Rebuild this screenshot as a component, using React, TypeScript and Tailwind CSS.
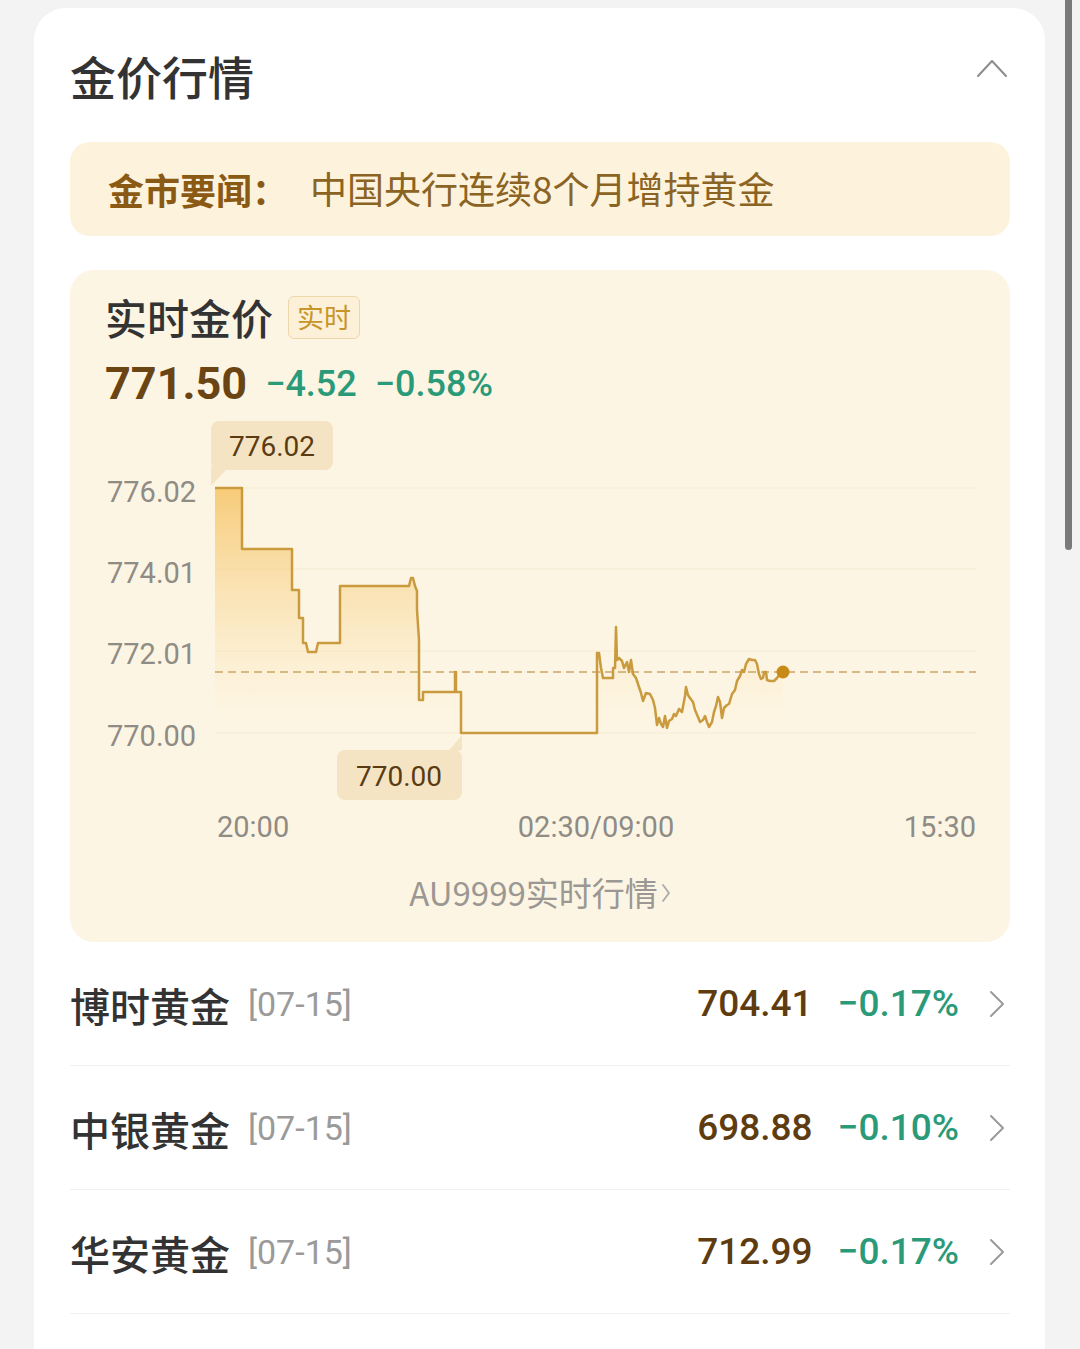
import React from 'react';

const CJK = "font-['Noto_Sans_CJK_SC','Noto_Sans',sans-serif]";
const NUM = "font-['Roboto','Noto_Sans_CJK_SC',sans-serif]";

const linePath =
  'M215,488 H242 V549 H292 V590 H299 V618 H303 V643 H306 L308,652 H316 L318,643 H340 V586 H409 L411,578 H413 L415,586 L417,591 V610 L419,640 V700 H423 V692 H455 V672 H456 V692 H461 V733 H597 V653 H599 L601,668 L603,678 H613 V668 L615,668 L616,627 L617,660 L619,658 L622,661 L624,668 L627,662 L629,672 L631,660 L633,674 L636,678 L638,684 L641,693 L643,701 L646,693 L650,694 L653,700 L655,708 L657,725 L659,718 L661,724 L663,727 L665,716 L667,728 L669,721 L672,719 L674,714 L676,716 L679,709 L682,712 L685,696 L686,687 L688,695 L690,698 L693,702 L695,710 L698,717 L700,722 L703,720 L705,716 L707,722 L709,727 L712,722 L714,712 L716,706 L718,697 L720,702 L722,718 L724,708 L727,705 L729,704 L732,694 L735,690 L737,681 L740,676 L742,670 L744,672 L746,664 L749,659 L752,660 L755,660 L757,664 L759,674 L761,679 L763,678 L764,672 L766,672 L767,680 L770,681 L774,681 L777,678 L780,674 L783,672';

const funds = [
  { name: '博时黄金', date: '[07-15]', price: '704.41', pct: '−0.17%' },
  { name: '中银黄金', date: '[07-15]', price: '698.88', pct: '−0.10%' },
  { name: '华安黄金', date: '[07-15]', price: '712.99', pct: '−0.17%' },
];

const Chevron = () => (
  <svg width="16" height="28" viewBox="0 0 16 28" fill="none">
    <path d="M2 2 L14 14 L2 26" stroke="#9a9a9a" strokeWidth="2" strokeLinecap="round" strokeLinejoin="round" />
  </svg>
);

// price chart, drawn in page coordinates (viewBox offset to the card origin)
const GoldChart = () => (
  <svg width="940" height="435" viewBox="70 415 940 435" className="block">
    <defs>
      <linearGradient id="goldFill" gradientUnits="userSpaceOnUse" x1="0" y1="488" x2="0" y2="735">
        <stop offset="0" stopColor="#f6c466" stopOpacity="0.85" />
        <stop offset="0.75" stopColor="#f8d690" stopOpacity="0.15" />
        <stop offset="1" stopColor="#fdf5e2" stopOpacity="0" />
      </linearGradient>
    </defs>

    {[488, 569, 651, 733].map((y) => (
      <line key={y} x1="215" x2="976" y1={y} y2={y} stroke="#f5ead2" strokeWidth="1" />
    ))}

    <path d={`${linePath} L783,733 L215,733 Z`} fill="url(#goldFill)" />
    <line x1="215" x2="976" y1="672" y2="672" stroke="#c9a565" strokeWidth="1.5" strokeDasharray="8 5" />
    <path d={linePath} fill="none" stroke="#c99a3e" strokeWidth="2.5" strokeLinejoin="round" />
    <circle cx="783" cy="672" r="6.5" fill="#c98b18" />

    <g fill="#8f8b85" fontSize="29" fontFamily="Roboto, sans-serif">
      <text x="107" y="502">776.02</text>
      <text x="107" y="583">774.01</text>
      <text x="107" y="664">772.01</text>
      <text x="107" y="746">770.00</text>
      <text x="217" y="837">20:00</text>
      <text x="596" y="837" textAnchor="middle">02:30/09:00</text>
      <text x="976" y="837" textAnchor="end">15:30</text>
    </g>

    <rect x="211" y="421" width="122" height="49" rx="8" fill="#f4e4c4" />
    <polygon points="211,466 226,470 211,486" fill="#f4e4c4" />
    <text x="272" y="456" textAnchor="middle" fill="#5a3b12" fontSize="28" fontFamily="Roboto, sans-serif">776.02</text>

    <rect x="337" y="750" width="125" height="50" rx="8" fill="#f4e4c4" />
    <polygon points="446,754 462,750 462,735" fill="#f4e4c4" />
    <text x="399" y="786" textAnchor="middle" fill="#5a3b12" fontSize="28" fontFamily="Roboto, sans-serif">770.00</text>
  </svg>
);

export default function App() {
  return (
    <div className="relative w-[1080px] h-[1349px] overflow-hidden bg-[#f3f3f3] pt-[8px] pl-[34px]">
      <div className="w-[1011px] min-h-[1400px] rounded-[32px] bg-white pl-[36px] pr-[35px]">
        {/* Header */}
        <div className="flex items-center justify-between pt-[44px]">
          <h2 className={`${CJK} text-[46px] leading-[46px] font-medium text-[#333]`}>金价行情</h2>
          <svg width="32" height="20" viewBox="0 0 32 20" fill="none" className="mr-[2px] -mt-[14px]">
            <path d="M2 18 L16 3 L30 18" stroke="#8c8c8c" strokeWidth="2" strokeLinecap="round" strokeLinejoin="round" />
          </svg>
        </div>

        {/* News */}
        <div className="mt-[44px] h-[94px] rounded-[20px] bg-[#fdf3dc] flex items-center px-[38px]">
          <span className={`${CJK} text-[36px] font-bold text-[#8a5a14]`}>金市要闻：</span>
          <span className={`${CJK} ml-[22px] text-[37px] text-[#8b6424]`}>中国央行连续8个月增持黄金</span>
        </div>

        {/* Realtime price card */}
        <div className="mt-[34px] h-[672px] rounded-[24px] bg-[#fdf5e3]">
          <div className="flex items-center gap-[15px] pt-[24px] pl-[35px]">
            <span className={`${CJK} text-[42px] leading-[46px] font-medium text-[#333]`}>实时金价</span>
            <span className={`${CJK} h-[43px] flex items-center px-[8px] rounded-[6px] border border-[#ecd7aa] bg-[#fcf1d8] text-[27px] text-[#c8952a]`}>
              实时
            </span>
          </div>
          <div className={`${NUM} flex items-center gap-[18px] mt-[19px] pl-[35px] h-[50px]`}>
            <span className="text-[45px] font-bold text-[#6a4413]">771.50</span>
            <span className="text-[36px] font-medium text-[#2a9a79]">−4.52</span>
            <span className="text-[36px] font-medium text-[#2a9a79]">−0.58%</span>
          </div>
          <div className="mt-[6px]">
            <GoldChart />
          </div>
          <div className={`${CJK} mt-[23px] h-[40px] flex items-center justify-center text-[33px] text-[#9b9894]`}>
            AU9999实时行情
            <svg width="10" height="22" viewBox="0 0 10 22" fill="none" className="ml-[3px]">
              <path d="M2 3 L8 11 L2 19" stroke="#aaa" strokeWidth="1.8" strokeLinecap="round" strokeLinejoin="round" />
            </svg>
          </div>
        </div>

        {/* Fund list */}
        {funds.map((f) => (
          <div key={f.name} className="h-[124px] flex items-center justify-between border-b border-[#f0f0f0] pr-[5px]">
            <div className="flex items-center gap-[18px] pt-[2px]">
              <span className={`${CJK} text-[40px] font-medium text-[#333]`}>{f.name}</span>
              <span className={`${NUM} text-[34px] text-[#9a9a9a]`}>{f.date}</span>
            </div>
            <div className={`${NUM} flex items-center`}>
              <span className="text-[37px] font-medium text-[#5e3c10]">{f.price}</span>
              <span className="ml-[25px] text-[37px] font-medium text-[#2a9a79]">{f.pct}</span>
              <span className="ml-[30px]">
                <Chevron />
              </span>
            </div>
          </div>
        ))}
      </div>

      {/* scrollbar */}
      <div className="absolute top-0 left-[1065px] w-[7px] h-[550px] rounded-b-full bg-[#7a7a7a]" />
    </div>
  );
}
